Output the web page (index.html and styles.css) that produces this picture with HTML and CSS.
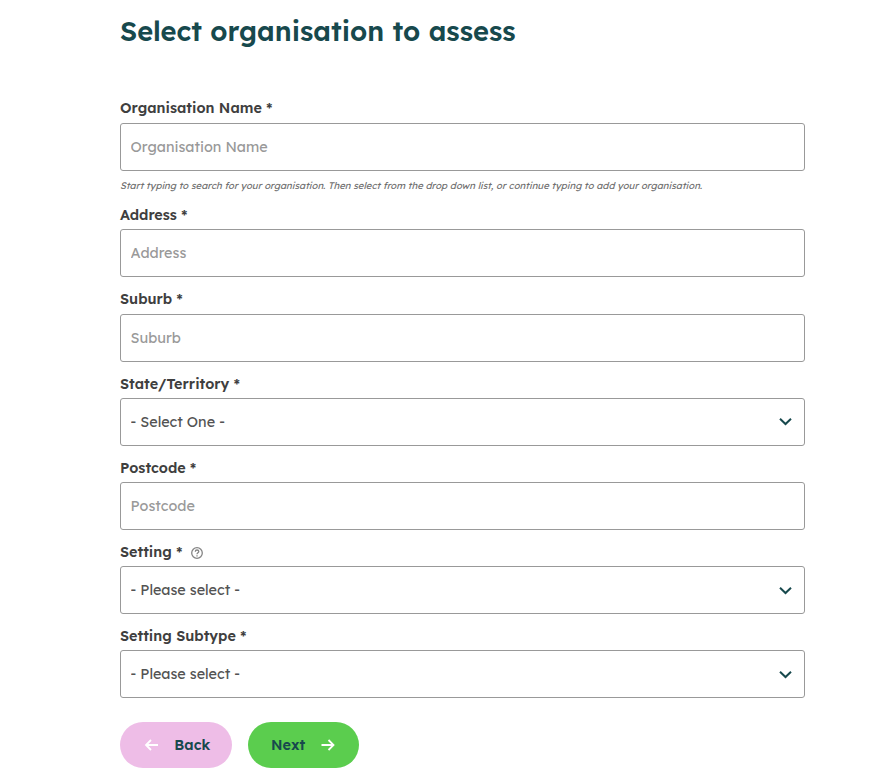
FILE: index.html
```html
<!DOCTYPE html>
<html lang="en">
<head>
    <meta charset="UTF-8">
    <meta name="viewport" content="width=device-width, initial-scale=1.0">
    <title>Select organisation to assess</title>
    <link rel="stylesheet" href="styles.css">
</head>
<body>
    <main>
        <h1>Select organisation to assess</h1>

        <form>
            <div class="field">
                <label for="name">Organisation Name *</label>
                <input type="text" id="name" placeholder="Organisation Name">
                <p class="hint">Start typing to search for your organisation. Then select from the drop down list, or continue typing to add your organisation.</p>
            </div>

            <div class="field">
                <label for="address">Address *</label>
                <input type="text" id="address" placeholder="Address">
            </div>

            <div class="field">
                <label for="suburb">Suburb *</label>
                <input type="text" id="suburb" placeholder="Suburb">
            </div>

            <div class="field">
                <label for="state">State/Territory *</label>
                <div class="select">
                    <select id="state"><option>- Select One -</option></select>
                    <svg class="chevron" viewBox="0 0 14 9"><path d="M1 1.7L6.5 7 12 1.7"/></svg>
                </div>
            </div>

            <div class="field">
                <label for="postcode">Postcode *</label>
                <input type="text" id="postcode" placeholder="Postcode">
            </div>

            <div class="field">
                <label for="setting">Setting *
                    <svg class="help" viewBox="0 0 12 12">
                        <circle cx="6" cy="6" r="5.3"/>
                        <path d="M4.3 4.8C4.3 3.6 5 3 6 3s1.8.6 1.8 1.6C7.8 5.8 6 5.8 6 7.2M6 8.2v1.2"/>
                    </svg>
                </label>
                <div class="select">
                    <select id="setting"><option>- Please select -</option></select>
                    <svg class="chevron" viewBox="0 0 14 9"><path d="M1 1.7L6.5 7 12 1.7"/></svg>
                </div>
            </div>

            <div class="field">
                <label for="subtype">Setting Subtype *</label>
                <div class="select">
                    <select id="subtype"><option>- Please select -</option></select>
                    <svg class="chevron" viewBox="0 0 14 9"><path d="M1 1.7L6.5 7 12 1.7"/></svg>
                </div>
            </div>

            <div class="actions">
                <button type="button" class="btn back">
                    <svg class="arrow" viewBox="0 0 14 12"><path d="M14 6H2M7 1L2 6l5 5"/></svg>
                    <span>Back</span>
                </button>
                <button type="button" class="btn next">
                    <span>Next</span>
                    <svg class="arrow" viewBox="0 0 14 12"><path d="M.5 6h12M7.5 1l5 5-5 5"/></svg>
                </button>
            </div>
        </form>
    </main>
</body>
</html>
```

FILE: styles.css
```css
:root {
    --dark-green: #17494d;
    --green: #5bcd4e;
    --pink: #eebde7;
    --text: #3f3f3f;
    --border: #999;
}

* {
    box-sizing: border-box;
}

body {
    font-family: Lexend, Inter, sans-serif;
    margin: 0;
    background: white;
    color: var(--text);
}

main {
    width: 685px;
    margin-left: 120px;
    padding-top: 13px;
}

h1 {
    margin: 0 0 50.8px;
    font-size: 27.2px;
    line-height: 36px;
    font-weight: 600;
    color: var(--dark-green);
    white-space: nowrap;
}

.field {
    margin-bottom: 14px;
}

label {
    display: flex;
    align-items: center;
    height: 22.2px;
    padding-bottom: 6.2px;
    font-size: 14.4px;
    font-weight: 600;
    line-height: 20px;
}

.field:first-child label {
    margin-bottom: 0.7px;
}

input, select {
    display: block;
    width: 100%;
    height: 48px;
    margin: 0;
    padding: 0 9.6px;
    border: 1px solid var(--border);
    border-radius: 3px;
    background: white;
    font-family: inherit;
    font-size: 14.4px;
    color: #535353;
    appearance: none;
}

select {
    padding-bottom: 0.5px;
}

input::placeholder {
    color: #999;
    opacity: 1;
}

.select {
    position: relative;
}

.chevron {
    position: absolute;
    top: 19.5px;
    right: 12px;
    width: 14px;
    height: 9px;
    fill: none;
    stroke: var(--dark-green);
    stroke-width: 2;
}

.help {
    width: 12px;
    height: 12px;
    margin: 2px 0 0 8.5px;
    fill: none;
    stroke: #858585;
    stroke-width: 1.3;
}

.hint {
    margin: 7.4px 0 0;
    padding-bottom: 1.2px;
    font-size: 9.6px;
    font-style: italic;
    line-height: 14px;
    color: #707070;
    white-space: nowrap;
}

.actions {
    display: flex;
    gap: 16px;
    padding-top: 10px;
}

.btn {
    display: flex;
    align-items: center;
    justify-content: space-between;
    height: 46px;
    padding: 0 21.8px 0 24px;
    border: none;
    border-radius: 23px;
    font-family: inherit;
    font-size: 14.4px;
    font-weight: 600;
    color: var(--dark-green);
    cursor: pointer;
}

.back {
    width: 112px;
    background: var(--pink);
}

.next {
    width: 111px;
    padding: 0 24.5px 0 23px;
    background: var(--green);
}

.arrow {
    width: 14px;
    height: 12px;
    fill: none;
    stroke: white;
    stroke-width: 1.8;
}
```
